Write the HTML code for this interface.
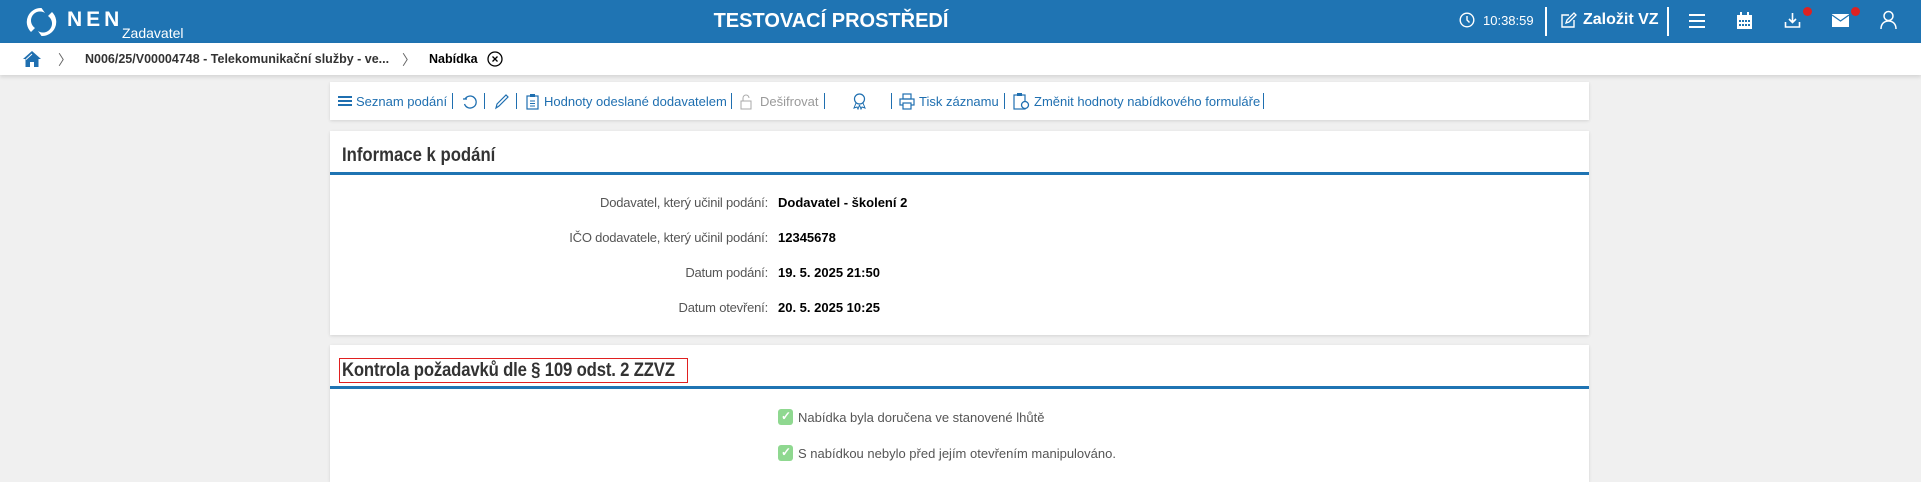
<!DOCTYPE html>
<html><head><meta charset="utf-8"><style>
*{margin:0;padding:0;box-sizing:border-box}
body{width:1921px;height:482px;overflow:hidden;background:#f0f0f0;font-family:"Liberation Sans",sans-serif;position:relative}
.a{position:absolute;white-space:nowrap}
#hdr{position:absolute;left:0;top:0;width:1921px;height:43px;background:#1f74b3;color:#fff}
#bc{position:absolute;left:0;top:43px;width:1921px;height:32px;background:#fff;box-shadow:0 2px 4px rgba(0,0,0,.12)}
.card{position:absolute;left:330px;width:1259px;background:#fff;box-shadow:0 1px 3px rgba(0,0,0,.12)}
.tb{font-size:13px;color:#1f6fb0;top:94px}
.sep{position:absolute;top:93px;width:1px;height:16px;background:#1f6fb0}
.lbl{font-size:13px;color:#555;right:1153px;letter-spacing:-.2px}
.val{font-size:13px;color:#000;font-weight:bold;left:778px}
.chk{position:absolute;left:778px;width:15px;height:16px;background:#8fd890;border-radius:3px}
.ttl{transform:scaleX(.88);transform-origin:0 0}
</style></head><body>
<div id="hdr">
 <svg class="a" style="left:25px;top:6px" width="33" height="32" viewBox="0 0 33 32"><path d="M16.5 2 A14 14 0 0 0 6 26 L10 22 A9 9 0 0 1 20 7 Z" fill="#fff"/><path d="M16.5 30 A14 14 0 0 0 27 6 L23 10 A9 9 0 0 1 13 25 Z" fill="#fff"/></svg>
 <div class="a" style="left:67px;top:8px;font-size:21px;font-weight:bold;letter-spacing:4px">NEN</div>
 <div class="a" style="left:122px;top:25px;font-size:14px">Zadavatel</div>
 <div class="a" style="left:706px;top:10px;font-size:20px;font-weight:bold;width:250px;text-align:center">TESTOVACÍ PROSTŘEDÍ</div>
 <svg class="a" style="left:1459px;top:12px" width="16" height="16" viewBox="0 0 16 16"><circle cx="8" cy="8" r="6.8" fill="none" stroke="#fff" stroke-width="1.4"/><path d="M8 4v4l2.5 2.5" fill="none" stroke="#fff" stroke-width="1.4"/></svg>
 <div class="a" style="left:1483px;top:13px;font-size:13px">10:38:59</div>
 <div class="a" style="left:1545px;top:7px;width:2px;height:29px;background:#fff"></div>
 <svg class="a" style="left:1560px;top:12px" width="17" height="17" viewBox="0 0 17 17"><path d="M9 3H2v12h12V8" fill="none" stroke="#fff" stroke-width="1.4"/><path d="M6 11l1-3 7-7 2 2-7 7z" fill="none" stroke="#fff" stroke-width="1.3"/></svg>
 <div class="a" style="left:1583px;top:11px;font-size:16px;font-weight:bold">Založit VZ</div>
 <div class="a" style="left:1667px;top:7px;width:2px;height:29px;background:#fff"></div>
 <div class="a" style="left:1689px;top:14px;width:16px;height:2px;background:#fff;box-shadow:0 6px 0 #fff,0 12px 0 #fff"></div>
 <svg class="a" style="left:1736px;top:12px" width="17" height="18" viewBox="0 0 17 18"><rect x="1" y="3" width="15" height="14" fill="#fff"/><rect x="4" y="0" width="2" height="5" fill="#fff"/><rect x="11" y="0" width="2" height="5" fill="#fff"/><g fill="#1f74b3"><rect x="3" y="8" width="2" height="2"/><rect x="6" y="8" width="2" height="2"/><rect x="9" y="8" width="2" height="2"/><rect x="12" y="8" width="2" height="2"/><rect x="3" y="12" width="2" height="2"/><rect x="6" y="12" width="2" height="2"/><rect x="9" y="12" width="2" height="2"/><rect x="12" y="12" width="2" height="2"/></g></svg>
 <svg class="a" style="left:1784px;top:12px" width="17" height="18" viewBox="0 0 17 18"><path d="M8.5 1v9M5 7l3.5 3.5L12 7M1.5 10v5h14v-5" fill="none" stroke="#fff" stroke-width="1.6"/></svg>
 <div class="a" style="left:1803px;top:7px;width:9px;height:9px;border-radius:50%;background:#d22"></div>
 <svg class="a" style="left:1832px;top:14px" width="17" height="13" viewBox="0 0 17 13"><rect width="17" height="13" fill="#fff"/><path d="M0 1l8.5 6L17 1" fill="none" stroke="#1f74b3" stroke-width="1.2"/></svg>
 <div class="a" style="left:1851px;top:7px;width:9px;height:9px;border-radius:50%;background:#d22"></div>
 <svg class="a" style="left:1880px;top:10px" width="17" height="20" viewBox="0 0 17 20"><circle cx="8.5" cy="6" r="4.5" fill="none" stroke="#fff" stroke-width="1.5"/><path d="M1 19c0-5 3-8 7.5-8s7.5 3 7.5 8" fill="none" stroke="#fff" stroke-width="1.5"/></svg>
</div>
<div id="bc">
 <svg class="a" style="left:23px;top:8px" width="18" height="16" viewBox="0 0 18 16"><path d="M9 0L0 8h2.5v8h4.5v-5h4v5h4.5V8H18z" fill="#1f6fb0"/><path d="M9 3L3 8.5" stroke="#fff" stroke-width="1"/></svg>
 <div class="a" style="left:58px;top:7px;font-size:14px;color:#666">〉</div>
 <div class="a" style="left:85px;top:9px;font-size:12.5px;color:#333;font-weight:bold">N006/25/V00004748 - Telekomunikační služby - ve...</div>
 <div class="a" style="left:402px;top:7px;font-size:14px;color:#666">〉</div>
 <div class="a" style="left:429px;top:9px;font-size:12.5px;color:#000;font-weight:bold">Nabídka</div>
 <svg class="a" style="left:487px;top:8px" width="16" height="16" viewBox="0 0 16 16"><circle cx="8" cy="8" r="7" fill="none" stroke="#000" stroke-width="1.3"/><path d="M5.5 5.5l5 5M10.5 5.5l-5 5" stroke="#000" stroke-width="1.3"/></svg>
</div>
<div class="card" style="top:82px;height:38px"></div>
<div class="a" style="left:338px;top:96px;width:14px;height:1.5px;background:#1f6fb0;box-shadow:0 4px 0 #1f6fb0,0 8px 0 #1f6fb0"></div>
<div class="a tb" style="left:356px">Seznam podání</div>
<div class="sep" style="left:452px"></div>
<svg class="a" style="left:462px;top:94px" width="16" height="16" viewBox="0 0 16 16"><path d="M3 5A6 6 0 1 1 2.5 10" fill="none" stroke="#1f6fb0" stroke-width="1.3"/><path d="M1 5h4" stroke="#1f6fb0" stroke-width="1.3"/></svg>
<div class="sep" style="left:484px"></div>
<svg class="a" style="left:494px;top:93px" width="16" height="17" viewBox="0 0 16 17"><path d="M2 15l1-4 9-9 2 2-9 9z" fill="none" stroke="#1f6fb0" stroke-width="1.2"/></svg>
<div class="sep" style="left:516px"></div>
<svg class="a" style="left:526px;top:93px" width="13" height="17" viewBox="0 0 13 17"><rect x="1" y="3" width="11" height="13" fill="none" stroke="#1f6fb0" stroke-width="1.2"/><rect x="4" y="1" width="5" height="3" fill="#1f6fb0"/><path d="M4 8h5M4 10.5h5M4 13h5" stroke="#1f6fb0"/></svg>
<div class="a tb" style="left:544px">Hodnoty odeslané dodavatelem</div>
<div class="sep" style="left:731px"></div>
<svg class="a" style="left:740px;top:94px" width="12" height="16" viewBox="0 0 12 16"><rect x="1" y="7" width="10" height="8" fill="none" stroke="#aaa"/><path d="M3 7V4a3 3 0 0 1 6 0" fill="none" stroke="#aaa"/></svg>
<div class="a tb" style="left:760px;color:#9a9a9a">Dešifrovat</div>
<div class="sep" style="left:824px"></div>
<svg class="a" style="left:852px;top:93px" width="15" height="17" viewBox="0 0 15 17"><circle cx="7.5" cy="6" r="5" fill="none" stroke="#1f6fb0" stroke-width="1.2"/><path d="M4 10l-2 5 3-1 1 2 1.5-4M11 10l2 5-3-1-1 2-1.5-4" fill="none" stroke="#1f6fb0"/></svg>
<div class="sep" style="left:891px"></div>
<svg class="a" style="left:899px;top:93px" width="16" height="17" viewBox="0 0 16 17"><rect x="4" y="1" width="8" height="5" fill="none" stroke="#1f6fb0" stroke-width="1.2"/><rect x="1" y="6" width="14" height="6" fill="none" stroke="#1f6fb0" stroke-width="1.2"/><rect x="4" y="10" width="8" height="6" fill="#fff" stroke="#1f6fb0" stroke-width="1.2"/></svg>
<div class="a tb" style="left:919px">Tisk záznamu</div>
<div class="sep" style="left:1004px"></div>
<svg class="a" style="left:1013px;top:92px" width="17" height="18" viewBox="0 0 17 18"><rect x="1" y="3" width="11" height="14" fill="none" stroke="#1f6fb0" stroke-width="1.2"/><rect x="4" y="1" width="5" height="3" fill="#1f6fb0"/><circle cx="12" cy="13" r="3.5" fill="#fff" stroke="#1f6fb0" stroke-width="1.3"/></svg>
<div class="a tb" style="left:1034px">Změnit hodnoty nabídkového formuláře</div>
<div class="sep" style="left:1263px"></div>

<div class="card" style="top:131px;height:204px"></div>
<div class="a ttl" style="left:342px;top:145px;font-size:19px;font-weight:bold;color:#333">Informace k podání</div>
<div class="a" style="left:330px;top:172px;width:1259px;height:3px;background:#1f74b3"></div>
<div class="a lbl" style="top:195px">Dodavatel, který učinil podání:</div><div class="a val" style="top:195px">Dodavatel - školení 2</div>
<div class="a lbl" style="top:230px">IČO dodavatele, který učinil podání:</div><div class="a val" style="top:230px">12345678</div>
<div class="a lbl" style="top:265px">Datum podání:</div><div class="a val" style="top:265px">19. 5. 2025 21:50</div>
<div class="a lbl" style="top:300px">Datum otevření:</div><div class="a val" style="top:300px">20. 5. 2025 10:25</div>

<div class="card" style="top:345px;height:137px"></div>
<div class="a" style="left:339px;top:358px;width:349px;height:25px;border:1px solid #e02020"></div>
<div class="a ttl" style="left:342px;top:360px;font-size:19px;font-weight:bold;color:#333;letter-spacing:-.2px">Kontrola požadavků dle § 109 odst. 2 ZZVZ</div>
<div class="a" style="left:330px;top:386px;width:1259px;height:3px;background:#1f74b3"></div>
<div class="chk" style="top:409px"></div><div class="a" style="left:781px;top:409px;color:#fff;font-size:12px;font-weight:bold">✓</div>
<div class="a" style="left:798px;top:410px;font-size:13px;color:#555">Nabídka byla doručena ve stanovené lhůtě</div>
<div class="chk" style="top:445px"></div><div class="a" style="left:781px;top:445px;color:#fff;font-size:12px;font-weight:bold">✓</div>
<div class="a" style="left:798px;top:446px;font-size:13px;color:#555">S nabídkou nebylo před jejím otevřením manipulováno.</div>
</body></html>
